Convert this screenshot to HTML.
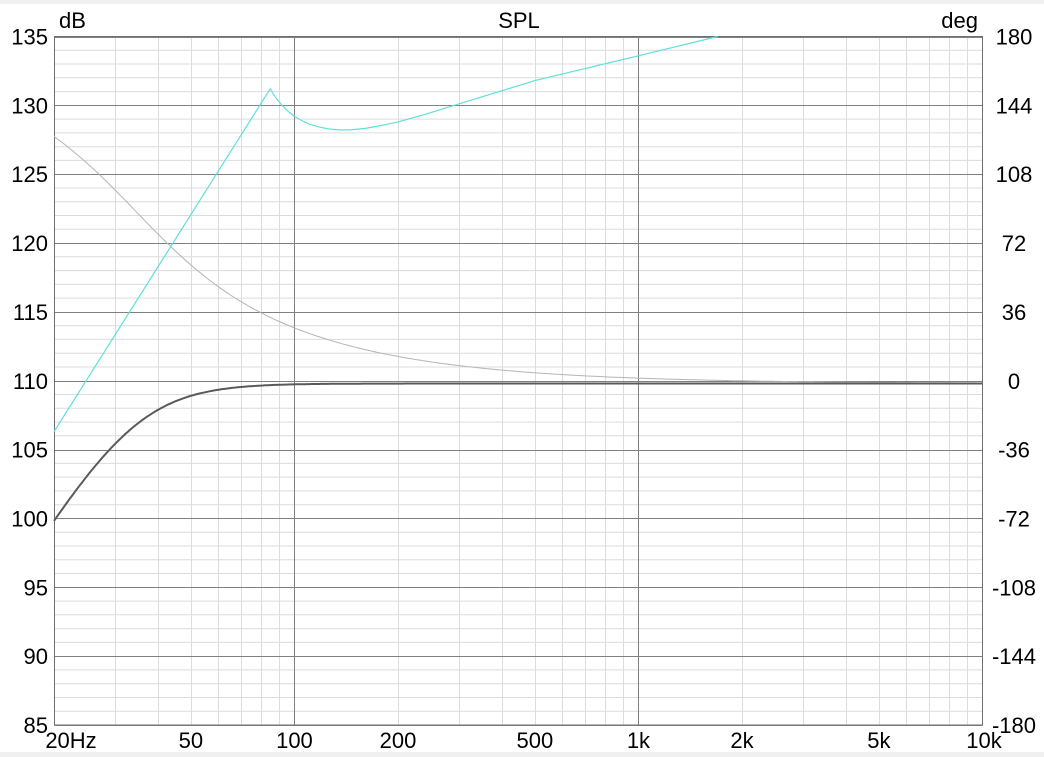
<!DOCTYPE html>
<html><head><meta charset="utf-8"><style>
html,body{margin:0;padding:0;background:#fff;}
body{width:1044px;height:757px;position:relative;overflow:hidden;font-family:"Liberation Sans",Arial,sans-serif;}
.band{position:absolute;left:0;width:1044px;background:#f0f0f0;}
svg{position:absolute;left:0;top:0;}
svg text{font-family:"Liberation Sans",Arial,sans-serif;font-size:22px;fill:#000;}
</style></head><body>
<div class="band" style="top:0;height:4px"></div>
<div class="band" style="top:752px;height:5px"></div>
<svg id="s" width="1044" height="757" xmlns="http://www.w3.org/2000/svg"></svg>
<script>
var L=54.5,R=982.5,T=36.5,B=725,D=344;
function X(f){return 54+D*Math.log10(f/20);}
function Y(db){return T+(135-db)*(B-T)/50;}
var s='';
for(var d=86;d<135;d++){if(d%5)s+='<line x1="'+L+'" x2="'+R+'" y1="'+Y(d).toFixed(1)+'" y2="'+Y(d).toFixed(1)+'" stroke="#dcdcdc" stroke-width="1"/>';}
var fs=[30,40,50,60,70,80,90,200,300,400,500,600,700,800,900,2000,3000,4000,5000,6000,7000,8000,9000];
fs.forEach(function(f){var x=Math.round(X(f))+.5;s+='<line x1="'+x+'" x2="'+x+'" y1="'+T+'" y2="'+B+'" stroke="#dcdcdc"/>';});
for(var d=85;d<=135;d+=5){var y=Math.round(Y(d))+.5;s+='<line x1="'+L+'" x2="'+R+'" y1="'+y+'" y2="'+y+'" stroke="#808080"/>';}
[100,1000].forEach(function(f){var x=Math.round(X(f))+.5;s+='<line x1="'+x+'" x2="'+x+'" y1="'+T+'" y2="'+B+'" stroke="#808080"/>';});
s+='<rect x="'+L+'" y="'+T+'" width="'+(R-L)+'" height="'+(B-T)+'" fill="none" stroke="#707070"/>';
var p1='',p2='';
for(var i=0;i<=400;i++){var f=20*Math.pow(500,i/400),x=X(f).toFixed(1);var fc=34.6,w=f/fc;
var mag=10*Math.log10(Math.pow(w,4)/(Math.pow(w,4)+1));
var ph=180-Math.atan2(Math.SQRT2*w,1-w*w)*180/Math.PI;
p1+=(i?'L':'M')+x+' '+Y(109.8+mag).toFixed(1);
p2+=(i?'L':'M')+x+' '+Y(109.8+ph/7.2).toFixed(1);}
s+='<path d="'+p2+'" fill="none" stroke="#b4b4b4" stroke-width="1"/>';
s+='<path d="'+p1+'" fill="none" stroke="#5a5a5a" stroke-width="2"/>';
var cp=[[20,106.3],[85,131.2],[88,130.6],[92,130.0],[96,129.55],[100,129.2],[105,128.9],[110,128.65],[117,128.45],[125,128.3],[135,128.22],[145,128.22],[160,128.32],[180,128.55],[200,128.8],[240,129.35],[283,129.9],[500,131.8],[1000,133.6],[1700,135]];
var c='';cp.forEach(function(p,i){c+=(i?'L':'M')+X(p[0]).toFixed(1)+' '+Y(p[1]).toFixed(1);});
s+='<path d="'+c+'" fill="none" stroke="#5fe0d8" stroke-width="1.2" stroke-linejoin="round"/>';
var dl=[135,130,125,120,115,110,105,100,95,90,85],rl=['180','144','108','72','36','0','-36','-72','-108','-144','-180'];
dl.forEach(function(d,i){var y=Y(d)+8;s+='<text x="48" y="'+y+'" text-anchor="end">'+d+'</text>';s+='<text x="1014" y="'+y+'" text-anchor="middle">'+rl[i]+'</text>';});
s+='<text x="59" y="28">dB</text><text x="519" y="28" text-anchor="middle">SPL</text><text x="978" y="28" text-anchor="end">deg</text>';
var xl=[[20,'20Hz',71],[50,'50'],[100,'100'],[200,'200'],[500,'500'],[1000,'1k'],[2000,'2k'],[5000,'5k'],[10000,'10k',984]];
xl.forEach(function(a){var x=a[2]||X(a[0]);s+='<text x="'+x+'" y="748" text-anchor="middle">'+a[1]+'</text>';});
document.getElementById('s').innerHTML=s;
</script>
</body></html>
